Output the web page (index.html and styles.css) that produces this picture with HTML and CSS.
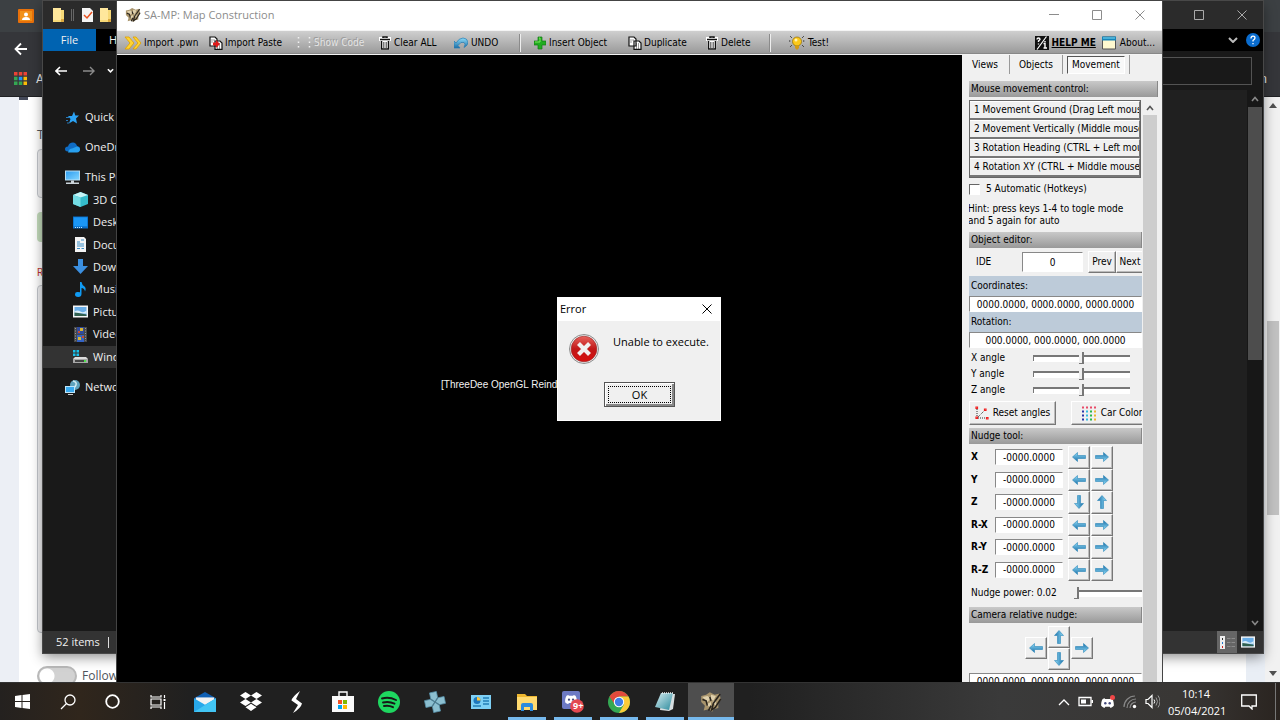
FILE: index.html
```html
<!DOCTYPE html>
<html lang="en">
<head>
<meta charset="utf-8">
<title>SA-MP: Map Construction</title>
<link rel="stylesheet" href="styles.css">
</head>
<body>
<svg class="defs" aria-hidden="true">
  <defs>
    <linearGradient id="blue" x1="0" y1="0" x2="0" y2="1"><stop offset="0" stop-color="#8fdcf8"/><stop offset="1" stop-color="#1a6fa8"/></linearGradient>
    <linearGradient id="sky" x1="0" y1="0" x2="1" y2="1"><stop offset="0" stop-color="#2f9df0"/><stop offset="1" stop-color="#7fd4ff"/></linearGradient>
    <linearGradient id="red" x1="0" y1="0" x2="0" y2="1"><stop offset="0" stop-color="#e8625c"/><stop offset=".5" stop-color="#c01818"/><stop offset="1" stop-color="#d81010"/></linearGradient>
    <linearGradient id="glass" x1="0" y1="0" x2="1" y2="1"><stop offset="0" stop-color="#d8eef2"/><stop offset="1" stop-color="#2a8a9c"/></linearGradient>
    <symbol id="arrow" viewBox="0 0 14 12"><path d="M.5 6 5.500 1.500v3h8v3h-8v3z" fill="url(#blue)" stroke="#2b86b8" stroke-width=".6"/></symbol>
    <symbol id="trash" viewBox="0 0 12 14"><path d="M0 1h12v4h-1l-.5 9h-9L1 5H0z" fill="#fff"/><path d="M4 2V1h4v1M1 3.500h10M2.500 5v8h7V5" fill="none" stroke="#111" stroke-width="1.500"/><path d="M4.500 6v6M6 6v6M7.500 6v6" stroke="#555" stroke-width=".8"/></symbol>
    <symbol id="pages" viewBox="0 0 14 14"><path d="M1 1h5l2 2v7H1zM6 5h5l2 2v6.400H6z" fill="#fff" stroke="#111" stroke-width="1.200"/><path d="M2.500 4h3M2.500 6h2M8 8h3M8 10h4M8 12h3" stroke="#111" stroke-width=".8" stroke-dasharray="1 1"/></symbol>
    <symbol id="fold" viewBox="0 0 13 16"><path d="M1 1h8v2h3v12H1z" fill="#f7d978"/><path d="M1 1h8v12H1z" fill="#ffe79c"/><path d="M9 12h3v3H9z" fill="#dca93f"/></symbol>
    <symbol id="map" viewBox="0 0 18 18"><path d="M1 4l4-1 3-2 4 2 4-1 1 5-2 3v4l-4 1-1 2-3-2-4 1 1-4-3-3z" fill="#a8946c"/><path d="M2 5l4-1 3 2-3 3zM9 3l4 1-2 4-2-1zM5 11l4-2v5zM10 9l3-2v5z" fill="#dfd0ac"/><path d="M16.500 2.500 11 10l-1.500 5.500 3-2 4.500-7M2 7l3 1 1 4M7 16l2-4M8 5l1 3" fill="none" stroke="#29241d" stroke-width="1.300"/></symbol>
    <symbol id="square" viewBox="0 0 10 10"><path d="M.5.5h9v9h-9z" fill="none" stroke="currentColor"/></symbol>
    <symbol id="cross" viewBox="0 0 10 10"><path d="M.5.5l9 9m0-9-9 9" fill="none" stroke="currentColor"/></symbol>
    <symbol id="up" viewBox="0 0 8 6"><path d="M1 5l3-3.500L7 5" fill="none" stroke="currentColor" stroke-width="1.600"/></symbol>
    <symbol id="discord" viewBox="0 0 16 12"><path d="M4.500 0C3 .3 2 1 2 1 .5 3.500 0 6.500.2 9.500 2 11.500 4.300 12 4.300 12l1-1.500h5.400l1 1.500s2.300-.5 4.100-2.500C16 6.500 15.500 3.500 14 1c0 0-1-.7-2.500-1L11 1H5z" fill="currentColor"/><circle cx="5.300" cy="6.200" r="1.500" fill="#454b7d"/><circle cx="10.700" cy="6.200" r="1.500" fill="#454b7d"/></symbol>
    <symbol id="photo" viewBox="0 0 15 12"><path d="M0 0h15v12H0z" fill="#f5f5f5"/><path d="M1.500 1.500h12v9h-12z" fill="#6aaee8"/><path d="M1.500 6q3-2 6 0t6-1v3h-12z" fill="#d8ecf7"/><path d="M1.500 7l4 .5 8 1.500v1.500h-12z" fill="#31604f"/></symbol>
  </defs>
</svg>

<main class="desktop">
  <section class="browser" aria-label="Browser">
    <div class="tabstrip"><svg class="i16" viewBox="0 0 16 14"><rect width="16" height="14" rx="1" fill="#e8710a"/><rect x="2" y="2" width="12" height="10" fill="#f29018"/><circle cx="8" cy="5.500" r="2" fill="#fff"/><path d="M4 11q0-3 4-3t4 3z" fill="#fff"/></svg></div>
    <div class="chrome-nav"><svg class="i14" viewBox="0 0 14 14"><path d="M13 7H2m5-5.500L1.500 7 7 12.500" fill="none" stroke="#fff" stroke-width="1.800"/></svg></div>
    <div class="bookmarks">
      <svg class="i13" viewBox="0 0 13 13"><path d="M0 0h3.500v3.500H0zM4.800 0h3.500v3.500H4.800zM9.500 0H13v3.500H9.500z" fill="#ea4335"/><path d="M0 4.800h3.500v3.500H0zM0 9.500h3.500V13H0z" fill="#34a853"/><path d="M4.800 4.800h3.500v3.500H4.800z" fill="#2196f3"/><path d="M4.800 9.500h3.500V13H4.800z" fill="#34a853"/><path d="M9.500 4.800H13v3.500H9.500zM9.500 9.500H13V13H9.500z" fill="#fbbc05"/></svg>
      <a href="#apps">A</a><span class="bm-end">n</span>
    </div>
    <div class="webpage">
      <div class="web-left"></div>
      <form class="web-form">
        <i class="web-mark"></i>
        <label class="web-label" for="t1">T</label>
        <input class="web-input" id="t1">
        <div class="web-green"></div>
        <label class="web-req" for="t2">R</label>
        <textarea class="web-area" id="t2"></textarea>
        <label class="follow"><input type="checkbox">Follow</label>
      </form>
      <div class="web-right"></div>
      <div class="web-scroll"><svg class="tri" viewBox="0 0 8 5"><path d="M0 5l4-5 4 5z" fill="#505050"/></svg><i></i><svg class="tri" viewBox="0 0 8 5"><path d="M0 0l4 5 4-5z" fill="#505050"/></svg></div>
    </div>
  </section>

  <section class="explorer" aria-label="File Explorer">
    <header class="ex-title">
      <svg class="fold"><use href="#fold"/></svg><i class="ex-bars"></i>
      <svg class="fold" viewBox="0 0 13 16"><path d="M1 1h8l3 3v11H1z" fill="#f4f4f4"/><path d="M3 8l3 3 5-6" fill="none" stroke="#e8501e" stroke-width="1.500"/></svg>
      <svg class="fold"><use href="#fold"/></svg>
      <span class="ex-win"><svg class="i10"><use href="#square"/></svg><svg class="i10"><use href="#cross"/></svg></span>
    </header>
    <div class="ribbon"><button class="file">File</button><button class="home">H</button>
      <svg class="rib-chev" viewBox="0 0 10 6"><path d="M1 1l4 4 4-4" fill="none" stroke="#bbb" stroke-width="2"/></svg>
      <svg class="i14" viewBox="0 0 14 14"><circle cx="7" cy="7" r="7" fill="#0a6cce"/><path d="M5 5.500q0-2.300 2-2.300t2 1.800q0 1-2 2.500v1M7 10v1.300" fill="none" stroke="#fff" stroke-width="1.300"/></svg></div>
    <div class="address">
      <svg class="i12" viewBox="0 0 12 10"><path d="M12 5H1m4-4L1 5l4 4" fill="none" stroke="#fff" stroke-width="1.600"/></svg>
      <svg class="i12" viewBox="0 0 12 10"><path d="M0 5h11M7 1l4 4-4 4" fill="none" stroke="#8a8a8a" stroke-width="1.400"/></svg>
      <svg class="i6" viewBox="0 0 8 6"><path d="M1 1l3 3 3-3" fill="none" stroke="#fff" stroke-width="1.800"/></svg>
      <input class="ex-path" aria-label="Address">
    </div>
    <div class="ex-body">
      <nav class="tree">
        <a href="#q"><svg class="i15" viewBox="0 0 15 14"><path d="M9 1l1.300 4H14l-3 3 1 5-4-2.500L4 13l1.500-4.500L3 5.500h4z" fill="#2ba3f5"/><path d="M1 7h3M1 10h2M2 12.500h2" stroke="#2878b8"/></svg>Quick access</a>
        <a href="#o"><svg class="i15" viewBox="0 0 15 10"><path d="M3 9Q0 9 0 6.500T3 4q1-4 5-4 3 0 4 3.500 3 .5 3 3T12 9z" fill="#0f6cc4"/><path d="M3 10q1-4 4-4l5-2q3 .5 3 3t-3 3z" fill="#28a0ee"/></svg>OneDrive</a>
        <div class="pc">
          <a class="root" href="#pc"><svg class="i15" viewBox="0 0 15 14"><path d="M0 0h15v10H0z" fill="#b9dff5"/><path d="M1 1h13v8H1z" fill="url(#sky)"/><path d="M6 10h3v2H6zM1 12h13v1.500H1z" fill="#ccd6dc"/></svg>This PC</a>
          <a href="#3d"><svg class="i15" viewBox="0 0 15 15"><path d="M7.500 0 15 3v9l-7.500 3L0 12V3z" fill="#35bccb"/><path d="M0 3l7.500-3L15 3 7.500 5.500z" fill="#c5f5f7"/><path d="M0 3l7.500 2.500V15L0 12z" fill="#74dce4"/></svg>3D Objects</a>
          <a href="#de"><svg class="i15" viewBox="0 0 15 12"><path d="M0 0h15v12H0z" fill="#0a6fc9"/><path d="M.8.8h13.400v9H.8z" fill="#1b97f7"/><path d="M2 11h7" stroke="#bfe4ff" stroke-dasharray="1 1"/></svg>Desktop</a>
          <a href="#do"><svg class="i15" viewBox="0 0 15 15"><path d="M2 0h9l2 2v13H2z" fill="#f3f3f3"/><path d="M4 5h3M8 3h3M4 7h7M4 9h7M4 11.500h3M8.500 11.500h2.500" fill="none" stroke="#3b8fca" stroke-width="1.200"/></svg>Documents</a>
          <a href="#dw"><svg class="i15" viewBox="0 0 15 15"><path d="M5 0h5v7h5l-7.500 8L0 7h5z" fill="#3b8fe0"/></svg>Downloads</a>
          <a href="#mu"><svg class="i15" viewBox="0 0 15 15"><path d="M7 0h1.500q.5 3 3 4.500 2 1.800.5 5Q11.500 6 8.500 6v6q0 3-3.300 3T2 12.300 5 10l2 .3z" fill="#109bf3"/></svg>Music</a>
          <a href="#pi"><svg class="i15"><use href="#photo"/></svg>Pictures</a>
          <a href="#vi"><svg class="i15" viewBox="0 0 15 15"><path d="M1 0h13v15H1z" fill="#484848"/><path d="M2.500 1v13M12.500 1v13" stroke="#999" stroke-dasharray="1 1.500"/><path d="M4 0h7v7H4z" fill="#304b9c"/><path d="M4 8h7v7H4z" fill="#3463c4"/><path d="M7 1h3v3H7zM5 10h3v3H5z" fill="#d6b432"/><path d="M5 4h2v2H5zM9 9h2v2H9z" fill="#c94c31"/></svg>Videos</a>
          <a class="sel" href="#wi"><svg class="i15" viewBox="0 0 15 13"><path d="M0 0h2.500v2.500H0zM3.500 0H6v2.500H3.500zM0 3.500h2.500V6H0zM3.500 3.500H6V6H3.500z" fill="#18c1ec"/><path d="M2 7h11l2 2H0z" fill="#ddd"/><path d="M0 9h15v4H0z" fill="#a8a8a8"/><path d="M2 10h11v2H2z" fill="#444"/><path d="M11 10h2v2h-2z" fill="#4be04b"/></svg>Windows (C:)</a>
        </div>
        <a class="net" href="#n"><svg class="i15" viewBox="0 0 15 15"><circle cx="10" cy="5" r="5" fill="#5fa3bd"/><path d="M8 1q4 1 3 4T7 8" fill="none" stroke="#d2ecf2" stroke-width="1.500"/><path d="M0 6h10v7H0z" fill="#bfe6fa"/><path d="M1 7h8v5H1z" fill="#38a9ee"/><path d="M3 14h5v1H3z" fill="#ccc"/></svg>Network</a>
      </nav>
      <div class="ex-scroll"><svg class="i8"><use href="#up"/></svg><i></i><svg class="i8 flip"><use href="#up"/></svg></div>
    </div>
    <footer class="ex-status"><span>52 items</span><i></i>
      <button class="view on" aria-label="Details"><svg class="i15" viewBox="0 0 15 13"><path d="M0 0h5v13H0z" fill="#eee"/><path d="M2.500 2v2" stroke="#333"/><path d="M2.500 6v2" stroke="#27c"/><path d="M2.500 10v2" stroke="#c22"/><path d="M7 2.500h8M7 6.500h8M7 10.500h8" stroke="#8b8b8b" stroke-dasharray="3.500 1"/></svg></button>
      <button class="view" aria-label="Large icons"><svg class="i14"><use href="#photo"/></svg></button>
    </footer>
  </section>

  <section class="app" aria-label="SA-MP: Map Construction">
    <header class="app-title"><svg class="i16"><use href="#map"/></svg><h1>SA-MP: Map Construction</h1>
      <span class="app-win"><svg class="i10" viewBox="0 0 10 10"><path d="M0 4.500h10" stroke="currentColor"/></svg><svg class="i10"><use href="#square"/></svg><svg class="i10"><use href="#cross"/></svg></span></header>
    <div class="toolbar">
      <button class="tool w-pwn"><svg class="i18" viewBox="0 0 18 14"><path d="M1 1h4l5 6-5 6H1l5-6zM9 1h3l5 6-5 6H9l5-6z" fill="#ffd530" stroke="#e09e00" stroke-width=".8"/></svg>Import .pwn</button>
      <button class="tool w-paste"><svg class="i14" viewBox="0 0 14 14"><use href="#pages"/><path d="M4 6.500h3V4l4 4-4 4V9.500H4z" fill="#e01b1b"/></svg>Import Paste</button>
      <button class="tool w-code" disabled><svg class="i14" viewBox="0 0 14 14"><path d="M1.500 1v12M12.500 1v12" stroke="#f2f2f2" stroke-width="1.500" stroke-dasharray="1.500 3"/></svg>Show Code</button>
      <button class="tool w-clear"><svg class="i12"><use href="#trash"/></svg>Clear ALL</button>
      <button class="tool w-undo"><svg class="i14" viewBox="0 0 14 12"><path d="M0 4v7h6L4 8.500Q7 4 10 5.500q2 1 0 5 4-2 4-5.500Q13 1 9 1 5 1 2 6z" fill="url(#blue)" stroke="#287db2" stroke-width=".7"/></svg>UNDO</button>
      <i class="sep"></i>
      <button class="tool w-insert"><svg class="i12" viewBox="0 0 12 12"><path d="M4 0h4v4h4v4H8v4H4V8H0V4h4z" fill="#20ad20" stroke="#167916" stroke-width=".7"/><path d="M5 1h1v4H1" fill="none" stroke="#7ee65f"/></svg>Insert Object</button>
      <button class="tool w-dup"><svg class="i14"><use href="#pages"/></svg>Duplicate</button>
      <button class="tool w-del"><svg class="i12"><use href="#trash"/></svg>Delete</button>
      <i class="sep"></i>
      <button class="tool w-test"><svg class="i16" viewBox="0 0 16 16"><path d="M1 1l2 2M15 1l-2 2M0 6h2M14 6h2M1 12l2-2M15 12l-2-2" stroke="#222" stroke-dasharray="1 .7"/><circle cx="8" cy="6.500" r="4.500" fill="#fcc91c" stroke="#8f6a00" stroke-width=".7"/><circle cx="7" cy="5" r="1.500" fill="#fff4b0"/><path d="M6 11h4v2l-2 2-2-2z" fill="#d49a17"/></svg>Test!</button>
      <button class="tool help"><svg class="i14" viewBox="0 0 14 14"><path d="M0 0h14v14H0z" fill="#111"/><path d="M2 13.500 11.500.5" stroke="#fff" stroke-width="1.200"/><path d="M2 3.500Q2 2 3.500 2T5 3.500L3.500 5v1M3.500 7.500v1M10 5v1.200M8.500 7.500H10V12M8.500 12h3.500" fill="none" stroke="#fff" stroke-width="1.400"/></svg><b>HELP ME</b></button>
      <button class="tool about"><svg class="i14" viewBox="0 0 14 13"><path d="M.5.5h13v12H.5z" fill="#fffad0" stroke="#555"/><path d="M0 0h14v4H0z" fill="#1684b8"/><path d="M1 1h12v1H1z" fill="#7fdcf6"/></svg>About...</button>
    </div>
    <div class="app-body">
      <div class="viewport"><p>[ThreeDee OpenGL Reindeer</p></div>
      <aside class="panel">
        <div class="tabs"><button>Views</button><button>Objects</button><button class="current"><span>Movement</span></button></div>
        <h2 class="bar wide">Mouse movement control:</h2>
        <div class="scroller">
          <div class="fields">
            <div class="modes"><button>1 Movement Ground (Drag Left mouse)</button><button>2 Movement Vertically (Middle mouse)</button><button>3 Rotation Heading (CTRL + Left mouse)</button><button>4 Rotation XY (CTRL + Middle mouse)</button></div>
            <label class="auto"><input type="checkbox">5 Automatic (Hotkeys)</label>
            <p class="hint">Hint: press keys 1-4 to togle mode<br>and 5 again for auto</p>
            <h2 class="bar">Object editor:</h2>
            <div class="ide"><label for="ide">IDE</label><input id="ide" value="0"><button>Prev</button><button>Next</button></div>
            <label class="blue" for="coord">Coordinates:</label><input class="triple" id="coord" value="0000.0000, 0000.0000, 0000.0000">
            <label class="blue" for="rot">Rotation:</label><input class="triple" id="rot" value="000.0000, 000.0000, 000.0000">
            <div class="angles">
              <label for="ax">X angle</label><input id="ax" type="range">
              <label for="ay">Y angle</label><input id="ay" type="range">
              <label for="az">Z angle</label><input id="az" type="range">
            </div>
            <div class="actions">
              <button><svg class="i14" viewBox="0 0 14 14"><path d="M2 3v9h10M3 11l7-7" fill="none" stroke="#333" stroke-dasharray="1 1"/><path d="M1 1h1.500v1.500H1zM9.500 3H11v1.500H9.500zM1 11h1.500v1.500H1zM11.500 11.500H13V13h-1.500z" fill="#fff" stroke="#f02020" stroke-width="1.200"/></svg>Reset angles</button>
              <button><svg class="i15" viewBox="0 0 15 14"><g fill="none" stroke-width="2" stroke-dasharray="2 2"><path d="M0 1h15" stroke="#e84b68"/><path d="M1 4v10" stroke="#2b35a8"/><path d="M5 4v10" stroke="#32bce0"/><path d="M9 4v10" stroke="#2ab64a"/><path d="M13 4v10" stroke="#efb62c"/></g></svg>Car Colors</button>
            </div>
            <h2 class="bar">Nudge tool:</h2>
            <div class="nudge">
              <label for="nx">X</label><input id="nx" value="-0000.0000"><button aria-label="X minus"><svg><use href="#arrow"/></svg></button><button aria-label="X plus"><svg class="r"><use href="#arrow"/></svg></button>
              <label for="ny">Y</label><input id="ny" value="-0000.0000"><button aria-label="Y minus"><svg><use href="#arrow"/></svg></button><button aria-label="Y plus"><svg class="r"><use href="#arrow"/></svg></button>
              <label for="nz">Z</label><input id="nz" value="-0000.0000"><button aria-label="Z minus"><svg class="d"><use href="#arrow"/></svg></button><button aria-label="Z plus"><svg class="u"><use href="#arrow"/></svg></button>
              <label for="nrx">R-X</label><input id="nrx" value="-0000.0000"><button aria-label="R-X minus"><svg><use href="#arrow"/></svg></button><button aria-label="R-X plus"><svg class="r"><use href="#arrow"/></svg></button>
              <label for="nry">R-Y</label><input id="nry" value="-0000.0000"><button aria-label="R-Y minus"><svg><use href="#arrow"/></svg></button><button aria-label="R-Y plus"><svg class="r"><use href="#arrow"/></svg></button>
              <label for="nrz">R-Z</label><input id="nrz" value="-0000.0000"><button aria-label="R-Z minus"><svg><use href="#arrow"/></svg></button><button aria-label="R-Z plus"><svg class="r"><use href="#arrow"/></svg></button>
            </div>
            <div class="power"><label for="pw">Nudge power: 0.02</label><input id="pw" type="range" value="0"></div>
            <h2 class="bar">Camera relative nudge:</h2>
            <div class="dpad"><button class="left" aria-label="Left"><svg><use href="#arrow"/></svg></button><button aria-label="Forward"><svg class="u"><use href="#arrow"/></svg></button><button aria-label="Back"><svg class="d"><use href="#arrow"/></svg></button><button class="right" aria-label="Right"><svg class="r"><use href="#arrow"/></svg></button></div>
            <input class="triple" aria-label="Camera position" value="0000.0000, 0000.0000, 0000.0000">
          </div>
          <div class="panel-scroll"><svg class="i8"><use href="#up"/></svg><i></i></div>
        </div>
      </aside>
    </div>
  </section>

  <section class="dialog" role="alertdialog" aria-label="Error">
    <header><span>Error</span><svg class="i10"><use href="#cross"/></svg></header>
    <div class="message"><svg class="i30" viewBox="0 0 30 30"><circle cx="15" cy="15" r="14.500" fill="#e8e8e8" stroke="#8d8d8d"/><circle cx="15" cy="15" r="12.800" fill="url(#red)" stroke="#9a2222" stroke-width=".6"/><path d="M9.500 9.500l11 11m0-11-11 11" stroke="#f1f1f1" stroke-width="4.200"/></svg><p>Unable to execute.</p></div>
    <button class="ok"><span>OK</span></button>
  </section>
</main>

<footer class="taskbar">
  <div class="system">
    <button aria-label="Start"><svg class="i15" viewBox="0 0 15 15"><path d="M0 2l6.500-1v6H0zM7.500 1 15 0v7H7.500zM0 8h6.500v6L0 13zM7.500 8H15v7l-7.500-1z" fill="#fff"/></svg></button>
    <button aria-label="Search"><svg class="i16" viewBox="0 0 16 16"><circle cx="10" cy="6" r="5" fill="none" stroke="#fff" stroke-width="1.300"/><path d="M6.500 9.500 1 15" stroke="#fff" stroke-width="1.300"/></svg></button>
    <button aria-label="Cortana"><svg class="i15" viewBox="0 0 15 15"><circle cx="7.500" cy="7.500" r="6.300" fill="none" stroke="#fff" stroke-width="1.800"/></svg></button>
    <button aria-label="Task view"><svg class="i16" viewBox="0 0 16 16"><path d="M1 1v2h10V1M1 5h10v6H1zM1 15v-2h10v2M14.500 1v3M14.500 8v7" fill="none" stroke="#fff" stroke-width="1.200"/><path d="M13.500 5h2v2h-2z" fill="#fff"/></svg></button>
  </div>
  <div class="pinned">
    <button aria-label="Mail"><svg class="i22" viewBox="0 0 24 22"><path d="M0 7l12-7 12 7v5H0z" fill="#1060b4"/><path d="M2 6h20v9H2z" fill="#f3f3f3"/><path d="M0 7l12 7L24 7v15H0z" fill="#28a8ea"/><path d="M0 22 24 7v15z" fill="#42c5f4"/></svg></button>
    <button aria-label="Dropbox"><svg class="i22" viewBox="0 0 22 20"><path d="M5.500 0 11 3.500 5.500 7 0 3.500zM16.500 0 22 3.500 16.500 7 11 3.500zM5.500 7 11 10.500 5.500 14 0 10.500zM16.500 7 22 10.500 16.500 14 11 10.500zM5.500 15.200 11 11.700l5.500 3.500L11 19z" fill="#fff"/></svg></button>
    <button aria-label="S"><svg class="i22" viewBox="0 0 22 22"><path d="M14 0Q6 6 5.500 9.500L12 14 7 22q8-5 9-9.500L10 8z" fill="#fff"/></svg></button>
    <button aria-label="Store"><svg class="i22" viewBox="0 0 22 22"><path d="M7 6V1h8v5" fill="none" stroke="#fff" stroke-width="1.400"/><path d="M0 5h22v16H0z" fill="#fafafa"/><path d="M6 9h4v4H6z" fill="#f25022"/><path d="M11 9h4v4h-4z" fill="#7fba00"/><path d="M6 14h4v4H6z" fill="#00a4ef"/><path d="M11 14h4v4h-4z" fill="#ffb900"/></svg></button>
    <button aria-label="Spotify"><svg class="i22" viewBox="0 0 22 22"><circle cx="11" cy="11" r="11" fill="#1ed760"/><path d="M4 7.500q7-2 14 1.500M5 11.500q6-1.500 11.500 1.200M6 15q5-1 9 1.200" fill="none" stroke="#171717" stroke-width="1.900" stroke-linecap="round"/></svg></button>
    <button aria-label="PPSSPP"><svg class="i22" viewBox="0 0 22 22"><g transform="rotate(-12 11 11)"><path d="M7.500 1h7v6L11 10.500 7.500 7zM21 7.500v7h-6L11.500 11 15 7.500zM14.500 21h-7v-6l3.500-3.500 3.500 3.500zM1 14.500v-7h6l3.500 3.500L7 14.500z" fill="#8cbfd0" stroke="#5794ac" stroke-width=".7"/></g></svg></button>
    <button aria-label="Control panel"><svg class="i20" viewBox="0 0 20 14"><path d="M0 0h20v14H0z" fill="#7ed0f5"/><circle cx="6" cy="5.500" r="3.500" fill="#1d78be"/><path d="M6 5.500V2a3.500 3.500 0 0 1 3.500 3.500z" fill="#ffc83d"/><path d="M12 3h6M12 6h6M12 9h6M2 11h8" stroke="#247fb7" stroke-width="1.400"/></svg></button>
    <button class="open" aria-label="Files"><svg class="i20" viewBox="0 0 20 18"><path d="M0 1h8l2 2h10v14H0z" fill="#eeb72f"/><path d="M0 4h20v13H0z" fill="#ffda70"/><path d="M4 18v-6q0-2 2-2h8q2 0 2 2v6h-3v-4H7v4z" fill="#2c8bdd"/></svg></button>
    <button class="open" aria-label="Discord"><svg class="i22" viewBox="0 0 22 22"><rect width="18" height="18" rx="2" fill="#6d7ac4"/><use href="#discord" x="3" y="4" width="12" height="9" color="#fff"/><circle cx="15" cy="15" r="6.800" fill="#e44850"/></svg><span class="badge">9+</span></button>
    <button class="open" aria-label="Chrome"><svg class="i22" viewBox="0 0 22 22"><circle cx="11" cy="11" r="11" fill="#34a853"/><path d="M1.500 5.500A11 11 0 0 1 20.500 5.500H11L6.500 13z" fill="#e24a3d"/><path d="M20.500 5.500A11 11 0 0 1 11 22l5-8.500-5-8z" fill="#fccb38"/><circle cx="11" cy="11" r="5.200" fill="#fff"/><circle cx="11" cy="11" r="4.200" fill="#3f7ee8"/></svg></button>
    <button class="open" aria-label="Notepad"><svg class="i22" viewBox="0 0 22 20"><path d="M8 2h13l-2 15-4 2-9-1z" fill="#d7dee0"/><path d="M7 1h12l-4 17L1 15z" fill="url(#glass)"/><path d="M8 1h12" stroke="#eee" stroke-width="1.500" stroke-dasharray="1 1"/></svg></button>
    <button class="open active" aria-label="Map Construction"><svg class="i22"><use href="#map"/></svg></button>
  </div>
  <div class="tray">
    <svg class="i12" viewBox="0 0 12 8"><path d="M1 7l5-5 5 5" fill="none" stroke="#fff" stroke-width="1.300"/></svg>
    <svg class="i15" viewBox="0 0 15 10"><path d="M1 1h12v8H1z" fill="none" stroke="#fff" stroke-width="1.300"/><path d="M3 3h5v4H3zM13.500 3.500H15v3h-1.500z" fill="#fff"/></svg>
    <svg class="i14" viewBox="0 0 14 14"><use href="#discord" x="0" y="3" width="13" height="10" color="#fff"/><circle cx="11.500" cy="2.500" r="2.500" fill="#f04747"/></svg>
    <svg class="i14" viewBox="0 0 14 14"><path d="M1 12A11 11 0 0 1 12 1M4 13a9 9 0 0 1 9-9M7 13a6 6 0 0 1 6-6" fill="none" stroke="#888" stroke-width="1.200"/><circle cx="11.500" cy="11.500" r="1.700" fill="#fff"/></svg>
    <svg class="i15" viewBox="0 0 15 14"><path d="M1 5h2l4-4v12L3 9H1z" fill="none" stroke="#fff" stroke-width="1.200"/><path d="M9 5q1.500 2 0 4" fill="none" stroke="#fff"/><path d="M11 3q3 4 0 8M13 1q4 6 0 12" fill="none" stroke="#999"/></svg>
    <time datetime="2021-04-05T10:14">10:14<br>05/04/2021</time>
    <svg class="i16" viewBox="0 0 16 16"><path d="M.7 1h14.600v11H11v3l-3-3H.7z" fill="none" stroke="#fff" stroke-width="1.300"/></svg>
    <i class="peek"></i>
  </div>
</footer>
</body>
</html>
```
FILE: styles.css
```css
* { box-sizing: border-box; }
body { margin: 0; height: 100vh; display: flex; flex-direction: column; overflow: hidden; background: #202020; color: #000; font: 11px/12px Roboto, "Noto Sans", sans-serif; }
button, input, textarea { font: inherit; color: inherit; margin: 0; padding: 0; border: 0; border-radius: 0; background: none; }
button { display: flex; align-items: center; justify-content: center; white-space: nowrap; }
input { min-width: 0; }
h1, h2, p { margin: 0; font: inherit; }
a { color: inherit; text-decoration: none; }
svg { flex: none; display: block; }
.defs { position: absolute; width: 0; height: 0; }
.i6 { width: 7px; height: 6px; }
.i8 { width: 8px; height: 6px; }
.i10 { width: 10px; height: 10px; }
.i12 { width: 12px; height: 14px; }
.i13 { width: 13px; height: 13px; }
.i14 { width: 14px; height: 14px; }
.i15 { width: 15px; height: 15px; }
.i16 { width: 16px; height: 16px; }
.i18 { width: 18px; height: 14px; }
.i20 { width: 20px; height: 20px; }
.i22 { width: 22px; height: 22px; }
.i30 { width: 30px; height: 30px; }
.desktop { flex: 1; min-height: 0; position: relative; overflow: hidden; }

/* Browser behind the other windows */
.browser { height: 100%; display: flex; flex-direction: column; background: #fff; }
.tabstrip { height: 32px; padding: 8px 18px; background: #3c4043; }
.chrome-nav { height: 34px; padding: 10px 14px; background: #35363a; }
.bookmarks { height: 31px; padding: 0 13px 5px 14px; display: flex; gap: 9px; align-items: center; background: #35363a; border-bottom: 1px solid #202124; color: #eee; font-size: 12px; }
.bm-end { margin-left: auto; }
.webpage { flex: 1; min-height: 0; display: flex; }
.web-left { width: 19px; background: #eceff5; }
.web-right { width: 19px; background: #e9eef5; }
.web-form { flex: 1; display: flex; flex-direction: column; align-items: flex-start; padding-left: 18px; color: #50545c; overflow: hidden; }
.web-mark { width: 9px; height: 3px; margin-left: -18px; background: #454a5a; flex: none; }
.web-label { margin-top: 26px; font: 13px/16px "Open Sans", sans-serif; }
.web-input { margin-top: 7px; width: 600px; height: 49px; flex: none; border: 1px solid #c3c7cc; border-radius: 4px; background: #f0f0f2; }
.web-green { margin-top: 14px; width: 600px; height: 30px; flex: none; border-radius: 4px; background: #c4dcbc; }
.web-req { margin-top: 25px; color: #b33; font-size: 10px; }
.web-area { margin-top: 6px; width: 600px; height: 348px; flex: none; resize: none; border: 1px solid #c3c7cc; border-radius: 4px; background: #f0f0f2; }
.follow { margin-top: 33px; display: flex; gap: 5px; align-items: center; font: 12px/20px "Open Sans", sans-serif; }
.follow input { appearance: none; width: 40px; height: 20px; border: 2px solid #b9b9b9; border-radius: 10px; background: radial-gradient(circle at 8px 8px, #fff 7px, #d2d2d2 8px); }
.web-scroll { width: 15px; display: flex; flex-direction: column; align-items: center; padding: 6px 0; background: #f1f1f1; }
.web-scroll i { width: 12px; height: 194px; margin: 213px 0 auto; background: #c1c1c1; }
.tri { width: 8px; height: 5px; }

/* File manager window */
.explorer { position: absolute; left: 43px; right: 17px; top: 1px; height: 652px; display: flex; flex-direction: column; background: #202020; color: #f0f0f0; box-shadow: 0 0 0 1px #484848, 0 4px 12px rgba(0, 0, 0, .45); font: 12px/16px "Open Sans", sans-serif; }
.ex-title { height: 28px; display: flex; align-items: center; gap: 7px; padding: 0 16px 0 9px; background: #2b2b2b; color: #aaa; }
.ex-title .fold:nth-of-type(3) { margin-left: -2px; }
.fold { width: 13px; height: 16px; }
.ex-bars { width: 3px; height: 12px; border: solid #666; border-width: 0 1px; margin: 0 0 0 -1px; }
.ex-win { margin-left: auto; display: flex; gap: 33px; }
.ribbon { height: 22px; display: flex; align-items: center; padding-right: 3px; background: #000; font-size: 11px; }
.file { width: 53px; height: 22px; background: #0063b1; }
.home { margin-left: 13px; }
.rib-chev { width: 10px; height: 6px; margin: 0 8px 0 auto; }
.address { height: 39px; display: flex; align-items: center; gap: 16px; padding: 0 11px 0 12px; background: #191919; }
.address .i12 + .i6 { margin-left: -4px; }
.ex-path { flex: 1; height: 28px; border: 1px solid #535353; background: #191919; }
.ex-body { flex: 1; min-height: 0; display: flex; justify-content: space-between; }
.tree { width: 160px; padding-top: 16px; background: #191919; font-size: 11px; }
.tree a { display: flex; align-items: center; gap: 5px; height: 22px; padding-left: 22px; margin-bottom: 8px; white-space: nowrap; }
.pc { height: 202px; display: grid; grid-template-rows: repeat(9, 1fr); }
.tree .pc a { height: auto; margin: 0; padding-left: 30px; }
.tree .pc a.root { padding-left: 22px; }
.tree .sel { background: #333; }
.tree .net { margin-top: 8px; }
.ex-scroll { width: 16px; display: flex; flex-direction: column; align-items: center; padding: 6px 0 5px; background: #171717; color: #888; }
.ex-scroll i { width: 14px; height: 253px; margin: 5px 0 auto; background: #4d4d4d; }
.flip { transform: rotate(180deg); }
.ex-status { height: 22px; display: flex; align-items: center; padding: 0 5px 0 13px; background: #333; font-size: 11px; }
.ex-status i { width: 1px; height: 11px; background: #ddd; margin: 0 auto 0 8px; }
.view { width: 20px; height: 22px; margin-left: 1px; }
.view.on { background: #666; }

/* Editor window */
.app { position: absolute; left: 117px; right: 118px; top: 1px; bottom: 0; display: flex; flex-direction: column; background: #f0f0f0; box-shadow: 0 0 0 1px #444; }
.app-title { height: 29px; display: flex; align-items: center; gap: 3px; padding: 0 17px 2px 8px; background: #fff; color: #8c8c8c; }
.app-title h1 { font: 11px/16px "Open Sans", sans-serif; }
.app-win { margin-left: auto; display: flex; gap: 33px; }
.toolbar { height: 25px; display: flex; align-items: center; padding: 0 7px; border: solid #f4f4f4; border-width: 1px 0; background: linear-gradient(#cfcfcf, #989898); box-shadow: inset 0 -1px #888; }
.toolbar, .panel { font-family: "DejaVu Sans Condensed", "DejaVu Sans", sans-serif; font-size: 10px; }
.tool { gap: 2px; justify-content: flex-start; height: 20px; }
.w-pwn { width: 85px; }
.w-paste { width: 88px; }
.w-code { width: 82px; gap: 3px; color: #e4e4e4; text-shadow: -1px -1px #999; }
.w-clear { width: 75px; gap: 3px; }
.w-undo { width: 65px; gap: 3px; }
.w-insert { width: 94px; gap: 3px; }
.w-dup { width: 78px; }
.w-del { width: 63px; gap: 3px; }
.w-test { gap: 3px; margin-left: 5px; }
.sep { width: 2px; height: 18px; margin-right: 13px; border-left: 1px solid #8b8b8b; border-right: 1px solid #eee; }
.help { margin: 0 6px 0 auto; gap: 3px; }
.help b { text-decoration: underline; }
.about { gap: 4px; }
.app-body { flex: 1; min-height: 0; display: flex; }
.viewport { flex: 1; background: #000; color: #f2f2f2; padding: 324px 0 0 324px; font: 10px/12px "Liberation Sans", sans-serif; white-space: nowrap; }
.panel { width: 200px; display: flex; flex-direction: column; padding: 0 4px 0 7px; overflow: hidden; }
.tabs { height: 26px; flex: none; display: flex; align-items: flex-start; }
.tabs button { height: 19px; padding: 0 9px; border-right: 1px solid #999; }
.tabs button:first-child { padding: 0 11px 0 3px; }
.tabs .current { padding: 0 4px; }
.current span { border: 1px solid; border-color: #555 #fff #fff #555; padding: 2px 4px; background: #f8f8f8; }
.bar { height: 16px; flex: none; padding: 2px; background: linear-gradient(#c9c9c9, #999); border-right: 1px solid #888; white-space: nowrap; }
.scroller { flex: 1; min-height: 0; display: flex; }
.fields { flex: 1; min-width: 0; display: flex; flex-direction: column; overflow: hidden; padding-top: 3px; }
.fields > * { flex: none; }
.modes { display: flex; flex-direction: column; border: 1px solid #666; margin-right: 1px; overflow: hidden; }
.modes button { height: 19px; justify-content: flex-start; padding-left: 4px; border-top: 1px solid #fff; border-bottom: 2px solid #777; border-right: 1px solid #777; overflow: hidden; }
.auto { display: flex; align-items: center; gap: 6px; height: 12px; margin-top: 5px; }
.auto input { appearance: none; width: 11px; height: 11px; background: #fff; border: 1px solid; border-color: #666 #fff #fff #666; }
.hint { margin: 8px 0 5px -1px; white-space: nowrap; }
.ide { height: 28px; display: flex; align-items: center; padding-left: 7px; overflow: hidden; }
.ide label { width: 46px; flex: none; }
.ide input { width: 61px; height: 20px; margin-right: 5px; flex: none; }
.ide button, .actions button, .nudge button, .dpad button { flex: none; border: 1px solid; border-color: #fff #777 #777 #fff; box-shadow: inset -1px -1px #bbb; }
.ide button { width: 28px; height: 22px; }
.ide input, .triple, .nudge input { background: #fff; text-align: center; border: 1px solid; border-color: #888 #fff #fff #888; }
.blue { height: 20px; padding: 4px 2px; background: #bdcbd9; }
.triple { height: 16px; width: 100%; }
.angles { display: grid; grid-template-columns: 62px 98px; grid-auto-rows: 16px; align-items: center; margin: 2px 0 3px; padding-left: 2px; }
input[type=range] { appearance: none; height: 14px; width: 97px; background: linear-gradient(#777, #777) 0 4px / 100% 2px no-repeat, linear-gradient(#777, #777) 0 4px / 1px 6px no-repeat, linear-gradient(#fff, #fff) 0 6px / 100% 5px no-repeat; }
input[type=range]::-webkit-slider-thumb { appearance: none; width: 5px; height: 12px; background: #f0f0f0; border: solid #777; border-width: 0 2px 1px 0; }
.actions { height: 24px; display: flex; gap: 15px; margin-bottom: 3px; overflow: hidden; }
.actions button { width: 87px; gap: 4px; }
.nudge { height: 135px; margin: 2px 0 5px; padding-left: 2px; display: grid; grid-template-columns: 23px 72px 22px 22px; column-gap: 1px; grid-template-rows: repeat(6, 1fr); align-items: stretch; }
.nudge label { align-self: center; font-weight: 700; }
.nudge input { width: 68px; height: 16px; align-self: center; }
.nudge button svg, .dpad svg { width: 14px; height: 12px; }
.r { transform: rotate(180deg); }
.u { transform: rotate(90deg); }
.d { transform: rotate(-90deg); }
.power { height: 14px; display: flex; align-items: center; margin-bottom: 7px; padding-left: 2px; overflow: hidden; }
.power label { width: 103px; flex: none; }
.power input { flex: none; }
.dpad { margin: 3px 0 3px 56px; display: grid; grid-template: 22px 22px / 22px 22px 22px; gap: 0 1px; grid-auto-flow: column; }
.dpad .left, .dpad .right { grid-row: 1 / 3; height: 22px; align-self: center; }
.panel-scroll { width: 16px; display: flex; flex-direction: column; align-items: center; gap: 4px; padding-top: 8px; color: #555; }
.panel-scroll i { flex: 1; width: 14px; background: #cdcdcd; }

/* Error box */
.dialog { position: absolute; left: 557px; top: 297px; width: 164px; display: flex; flex-direction: column; background: #f0f0f0; border: 1px solid #fff; font: 11px/16px "Open Sans", sans-serif; padding-bottom: 13px; }
.dialog header { height: 23px; display: flex; align-items: center; justify-content: space-between; padding: 0 8px 2px 2px; background: #fff; }
.message { display: flex; gap: 14px; padding: 13px 0 18px 11px; white-space: nowrap; }
.ok { width: 71px; height: 25px; margin-left: 46px; padding: 2px; align-items: stretch; border: 1px solid #555; box-shadow: inset 1px 1px #fff, inset -2px -2px #888; }
.ok span { flex: 1; border: 1px dotted #000; margin: 1px; line-height: 15px; }

/* Taskbar */
.taskbar { height: 38px; flex: none; display: flex; background: linear-gradient(90deg, #24211f, #30261c 80px, #202020 190px, #202020 750px, #3a3a3a 1000px, #393735 1180px, #2a2420); color: #fff; border-top: 1px solid #333; }
.system, .pinned, .tray { display: flex; }
.system button { width: 45px; }
.pinned { margin-left: 2px; }
.pinned button { width: 46px; position: relative; border: solid transparent; border-width: 0 4px; }
.pinned .open { background: linear-gradient(#76b9ed, #76b9ed) bottom / 38px 3px no-repeat padding-box; }
.pinned .active { border-width: 0; background: linear-gradient(#76b9ed, #76b9ed) bottom / 100% 3px no-repeat, #4e4e4e; }
.badge { position: absolute; left: 19px; top: 17px; font: 700 9px/12px "Open Sans", sans-serif; }
.tray { margin-left: auto; align-items: center; gap: 8px; }
.tray time { width: 56px; margin: 0 9px 0 0; text-align: center; font: 11px/17px "Open Sans", sans-serif; }
.peek { width: 5px; height: 38px; margin-left: 10px; border-left: 1px solid #777; }
```
